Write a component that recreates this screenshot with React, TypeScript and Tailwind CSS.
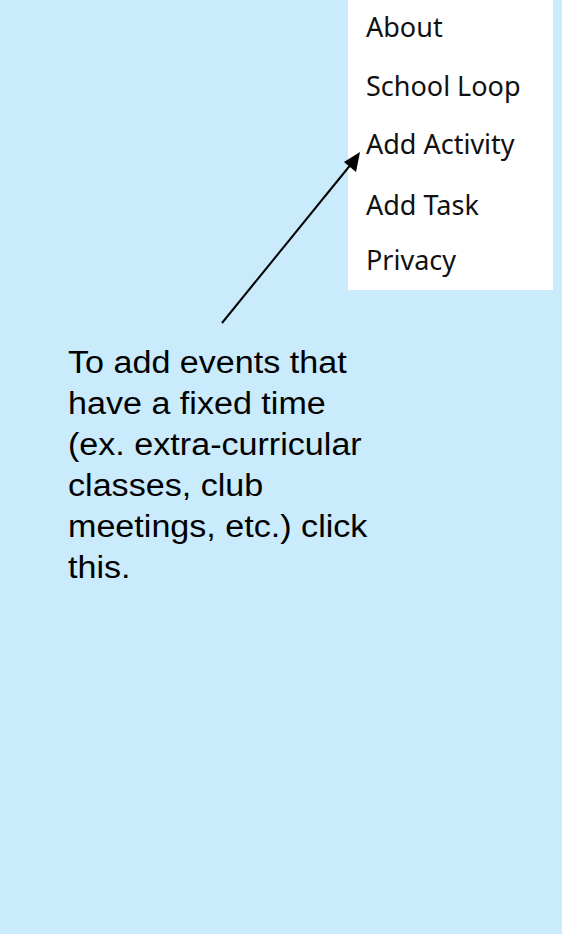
const items = [
  { label: 'About', gap: 'mt-0' },
  { label: 'School Loop', gap: 'mt-[25px]' },
  { label: 'Add Activity', gap: 'mt-[24px]' },
  { label: 'Add Task', gap: 'mt-[27px]' },
  { label: 'Privacy', gap: 'mt-[21px]' },
]

export default function App() {
  return (
    <div className="relative w-[562px] h-[934px] bg-[#c9ebfb] overflow-hidden">
      {/* dropdown menu */}
      <div
        className="ml-[348px] w-[205px] h-[290px] bg-white pl-[18px] pt-[10px] flex flex-col"
        style={{ fontFamily: '"Noto Sans", sans-serif' }}
      >
        {items.map((item) => (
          <div key={item.label} className={`${item.gap} text-[27px] leading-[34px] text-[#111]`}>
            {item.label}
          </div>
        ))}
      </div>

      {/* help note */}
      <div
        className="mt-[52px] ml-[68px] text-[31px] leading-[41px] text-black origin-left scale-x-[1.1]"
        style={{ fontFamily: '"Liberation Sans", Arial, sans-serif' }}
      >
        To add events that
        <br />
        have a fixed time
        <br />
        (ex. extra-curricular
        <br />
        classes, club
        <br />
        meetings, etc.) click
        <br />
        this.
      </div>

      {/* arrow pointing to Add Activity */}
      <svg className="absolute left-0 top-0" width="562" height="934">
        <line x1="222" y1="323" x2="352" y2="163" stroke="#000" strokeWidth="2" />
        <polygon points="360,152 356,172 344,162" fill="#000" />
      </svg>
    </div>
  )
}
